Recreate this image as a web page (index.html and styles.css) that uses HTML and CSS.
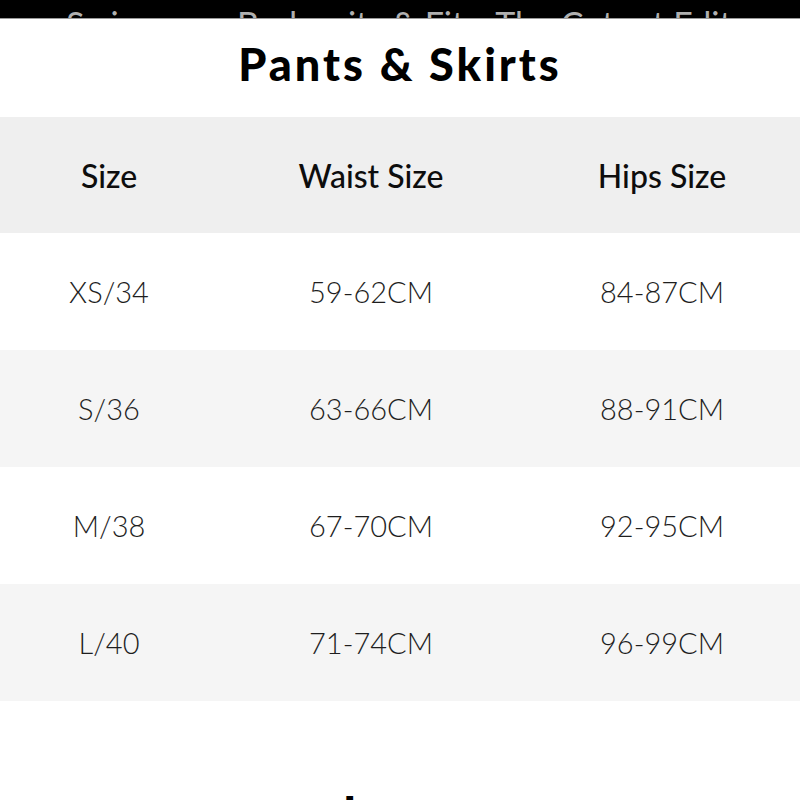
FILE: index.html
```html
<!DOCTYPE html>
<html lang="en">
<head>
    <meta charset="UTF-8">
    <meta name="viewport" content="width=device-width, initial-scale=1.0">
    <title>Size Guide</title>
    <link rel="stylesheet" href="styles.css">
</head>
<body>

    <div class="topbar">
        <span class="nav-text">Swimwear &nbsp;Bodysuits &amp; Fits &nbsp;The Cutout Edit</span>
    </div>

    <div class="sheet">
        <h2 class="chart-title">Pants &amp; Skirts</h2>

        <div class="size-table">
            <div class="row head">
                <div class="cell">Size</div>
                <div class="cell">Waist Size</div>
                <div class="cell">Hips Size</div>
            </div>
            <div class="row">
                <div class="cell">XS/34</div>
                <div class="cell">59-62CM</div>
                <div class="cell">84-87CM</div>
            </div>
            <div class="row alt">
                <div class="cell">S/36</div>
                <div class="cell">63-66CM</div>
                <div class="cell">88-91CM</div>
            </div>
            <div class="row">
                <div class="cell">M/38</div>
                <div class="cell">67-70CM</div>
                <div class="cell">92-95CM</div>
            </div>
            <div class="row alt">
                <div class="cell">L/40</div>
                <div class="cell">71-74CM</div>
                <div class="cell">96-99CM</div>
            </div>
        </div>

        <h2 class="chart-title next">Jeans</h2>
    </div>

</body>
</html>
```

FILE: styles.css
```css
body {
    font-family: Lato, "Noto Sans", sans-serif;
    background-color: #ffffff;
    margin: 0;
    padding: 0;
    color: #111;
}

.topbar {
    background: #000;
    height: 18px;
    overflow: hidden;
    padding-left: 66px;
    white-space: nowrap;
}

.nav-text {
    display: block;
    margin-top: 7px;
    height: 11px;
    overflow: hidden;
    font-size: 34px;
    line-height: 34px;
    color: #b0b0b0;
}

.sheet {
    border-top: 1px solid #9a9a9a;
    background: #fff;
}

.chart-title {
    font-size: 45px;
    font-weight: 900;
    text-align: center;
    letter-spacing: 3px;
    margin: 0;
    height: 98px;
    line-height: 90px;
    color: #000;
}

.chart-title.next {
    margin-top: 66px;
}

.row {
    display: grid;
    grid-template-columns: 218px 306px 1fr;
    height: 117px;
    align-items: center;
    background: #fff;
}

.row.alt {
    background: #f5f5f5;
}

.row.head {
    background: #efefef;
    height: 116px;
}

.cell {
    text-align: center;
    font-size: 29px;
    font-weight: 300;
    color: #1e1e1e;
}

.head .cell {
    font-size: 32px;
    font-weight: 500;
    color: #0d0d0d;
}
```
